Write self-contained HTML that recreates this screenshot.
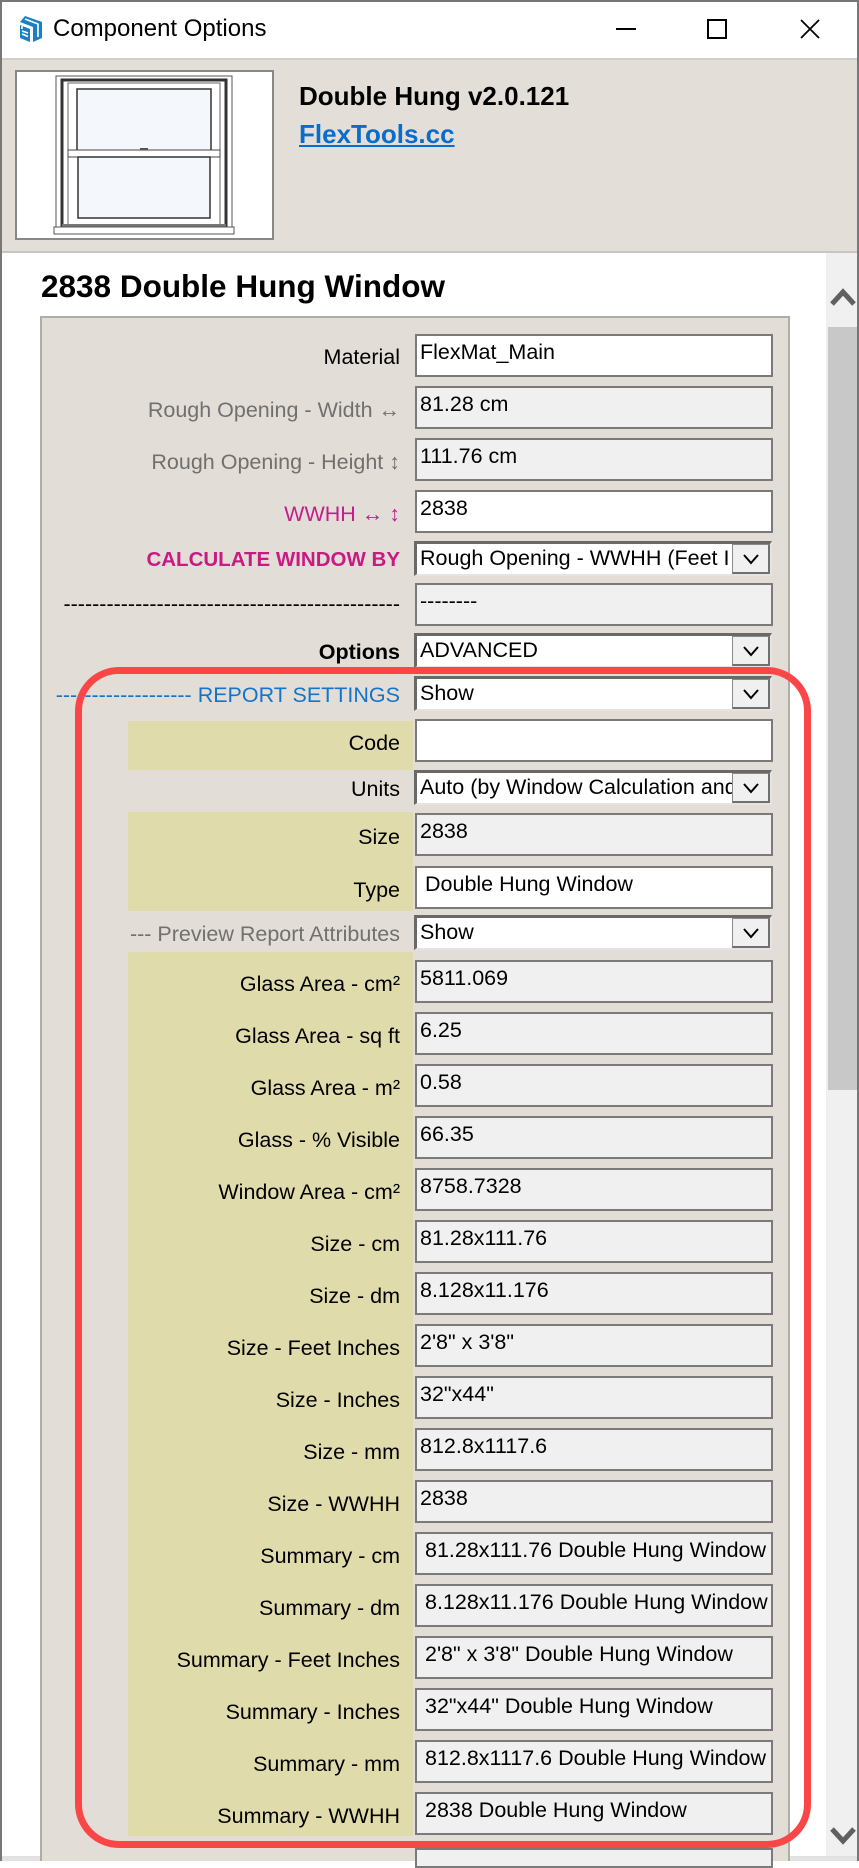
<!DOCTYPE html>
<html><head><meta charset="utf-8">
<style>
*{margin:0;padding:0;box-sizing:border-box}
body{width:859px;height:1861px;position:relative;overflow:hidden;background:#fff;font-family:"Liberation Sans",sans-serif;color:#000}
.a{position:absolute}
.lb{position:absolute;right:459px;font-size:21.5px;line-height:24px;white-space:nowrap;text-align:right}
.in{position:absolute;left:415px;width:358px;height:43px;border:2px solid #7a7a7a;background:#f0f0f0;font-size:21.5px;line-height:24px;padding:4px 0 0 3px;white-space:nowrap;overflow:hidden}
.w{background:#fff}
.sel{position:absolute;left:414px;width:358px;height:35px;background:#fff;border-top:3px solid #696969;border-left:3px solid #696969;border-right:2px solid #e4e4e4;border-bottom:2px solid #e4e4e4;font-size:21.5px;line-height:27px;padding:1px 0 0 3px;white-space:nowrap;overflow:hidden}
.sel .bt{position:absolute;right:0;top:0;width:38px;height:30px;background:#f0f0f0;border:1px solid #8a8a8a;border-right:2px solid #707070;border-bottom:2px solid #707070}
.bt svg{position:absolute;left:10px;top:8px}
.y{position:absolute;left:128px;width:285px;background:#e0dbaa}
</style></head><body>
<div class="a" style="left:0;top:0;width:859px;height:2px;background:#777"></div>
<div class="a" style="left:0;top:0;width:2px;height:1861px;background:#777"></div>
<div class="a" style="right:0;top:0;width:2px;height:1861px;background:#777"></div>
<svg class="a" style="left:16px;top:14px" width="30" height="30" viewBox="0 0 30 30"><path d="M9 2 L26 8 L26 24 L17 28 L17 13 L4 8 Z" fill="#1b7fc4"/><path d="M4 11 L14 15 L14 28 L4 24 Z" fill="#1b7fc4"/><path d="M6 12 L6 15 M6 17 L12 19 M6 20 L12 22.5 M9 5 L22 10 L22 23" stroke="#fff" stroke-width="1.6" fill="none"/></svg>
<div class="a" style="left:53px;top:15px;font-size:24px;line-height:28px">Component Options</div>
<div class="a" style="left:616px;top:28px;width:20px;height:2px;background:#000"></div>
<div class="a" style="left:707px;top:19px;width:20px;height:20px;border:2px solid #000"></div>
<svg class="a" style="left:800px;top:19px" width="20" height="20"><path d="M1 1 L19 19 M19 1 L1 19" stroke="#000" stroke-width="1.8"/></svg>
<div class="a" style="left:2px;top:58px;width:855px;height:195px;background:#e3dfd8;border-top:2px solid #d2cfc6;border-bottom:2px solid #c8c6c0"></div>
<div class="a" style="left:15px;top:70px;width:259px;height:170px;background:#fff;border:2px solid #888"></div>
<svg class="a" style="left:0;top:0" width="300" height="250">
<rect x="56" y="76" width="176" height="151" fill="#fff" stroke="#555" stroke-width="1"/>
<rect x="62" y="80" width="164" height="147" fill="none" stroke="#333" stroke-width="3"/>
<rect x="68" y="83" width="152" height="144" fill="none" stroke="#666" stroke-width="1"/>
<rect x="77" y="89" width="134" height="62" fill="#f4f8fc" stroke="#333" stroke-width="1.5"/>
<rect x="68" y="150" width="152" height="7" fill="#fff" stroke="#444" stroke-width="1"/>
<rect x="78" y="157" width="132" height="61" fill="#f4f8fc" stroke="#333" stroke-width="1.5"/>
<rect x="140" y="148" width="8" height="2" fill="#555"/>
<rect x="62" y="224" width="164" height="4" fill="#777"/>
<rect x="54" y="227" width="180" height="7" fill="#fff" stroke="#555" stroke-width="1"/>
</svg>
<div class="a" style="left:299px;top:81px;font-size:26px;font-weight:bold;line-height:30px">Double Hung v2.0.121</div>
<div class="a" style="left:299px;top:119px;font-size:26px;font-weight:bold;line-height:30px;color:#0a6ccc;text-decoration:underline">FlexTools.cc</div>
<div class="a" style="left:826px;top:253px;width:31px;height:1603px;background:#f0f0f0"></div>
<div class="a" style="left:828px;top:327px;width:29px;height:763px;background:#c8c8c8"></div>
<svg class="a" style="left:830px;top:286px" width="26" height="22"><path d="M2 18 L13 6 L24 18" stroke="#606060" stroke-width="5" fill="none"/></svg>
<svg class="a" style="left:830px;top:1825px" width="26" height="22"><path d="M2 4 L13 16 L24 4" stroke="#606060" stroke-width="5" fill="none"/></svg>
<div class="a" style="left:2px;top:1856px;width:855px;height:5px;background:#e2e2e2"></div>
<div class="a" style="left:41px;top:268px;font-size:31.5px;font-weight:bold;line-height:36px">2838 Double Hung Window</div>
<div class="a" style="left:40px;top:316px;width:750px;height:1545px;background:#e2ded7;border:2px solid #b0aca6;border-bottom:none"></div>
<div class="y" style="top:721px;height:49px"></div>
<div class="y" style="top:812px;height:99px"></div>
<div class="y" style="top:952px;height:884px"></div>

<div class="lb" style="top:345px">Material</div><div class="in w" style="top:334px">FlexMat_Main</div>
<div class="lb" style="top:398px;color:#707070">Rough Opening - Width ↔</div><div class="in" style="top:386px">81.28 cm</div>
<div class="lb" style="top:450px;color:#707070">Rough Opening - Height ↕</div><div class="in" style="top:438px">111.76 cm</div>
<div class="lb" style="top:502px;color:#c0208a">WWHH ↔ ↕</div><div class="in w" style="top:490px">2838</div>
<div class="lb" style="top:548px;color:#c81a82;font-weight:bold;font-size:20.5px">CALCULATE WINDOW BY</div><div class="sel" style="top:541px">Rough Opening - WWHH (Feet I<div class="bt"><svg width="16" height="12"><path d="M1 2 L8 10 L15 2" stroke="#000" stroke-width="2" fill="none"/></svg></div></div>
<div class="lb" style="top:592px">-----------------------------------------------</div><div class="in" style="top:583px">--------</div>
<div class="lb" style="top:640px;font-weight:bold">Options</div><div class="sel" style="top:633px">ADVANCED<div class="bt"><svg width="16" height="12"><path d="M1 2 L8 10 L15 2" stroke="#000" stroke-width="2" fill="none"/></svg></div></div>
<div class="lb" style="top:683px;color:#1474c8">------------------- REPORT SETTINGS</div><div class="sel" style="top:676px">Show<div class="bt"><svg width="16" height="12"><path d="M1 2 L8 10 L15 2" stroke="#000" stroke-width="2" fill="none"/></svg></div></div>
<div class="lb" style="top:731px">Code</div><div class="in w" style="top:719px"></div>
<div class="lb" style="top:777px">Units</div><div class="sel" style="top:770px">Auto (by Window Calculation and<div class="bt"><svg width="16" height="12"><path d="M1 2 L8 10 L15 2" stroke="#000" stroke-width="2" fill="none"/></svg></div></div>
<div class="lb" style="top:825px">Size</div><div class="in" style="top:813px">2838</div>
<div class="lb" style="top:878px">Type</div><div class="in w" style="top:866px;padding-left:8px">Double Hung Window</div>
<div class="lb" style="top:922px;color:#707070">--- Preview Report Attributes</div><div class="sel" style="top:915px">Show<div class="bt"><svg width="16" height="12"><path d="M1 2 L8 10 L15 2" stroke="#000" stroke-width="2" fill="none"/></svg></div></div>

<div class="lb" style="top:972px">Glass Area - cm²</div><div class="in" style="top:960px">5811.069</div>
<div class="lb" style="top:1024px">Glass Area - sq ft</div><div class="in" style="top:1012px">6.25</div>
<div class="lb" style="top:1076px">Glass Area - m²</div><div class="in" style="top:1064px">0.58</div>
<div class="lb" style="top:1128px">Glass - % Visible</div><div class="in" style="top:1116px">66.35</div>
<div class="lb" style="top:1180px">Window Area - cm²</div><div class="in" style="top:1168px">8758.7328</div>
<div class="lb" style="top:1232px">Size - cm</div><div class="in" style="top:1220px">81.28x111.76</div>
<div class="lb" style="top:1284px">Size - dm</div><div class="in" style="top:1272px">8.128x11.176</div>
<div class="lb" style="top:1336px">Size - Feet Inches</div><div class="in" style="top:1324px">2'8" x 3'8"</div>
<div class="lb" style="top:1388px">Size - Inches</div><div class="in" style="top:1376px">32"x44"</div>
<div class="lb" style="top:1440px">Size - mm</div><div class="in" style="top:1428px">812.8x1117.6</div>
<div class="lb" style="top:1492px">Size - WWHH</div><div class="in" style="top:1480px">2838</div>
<div class="lb" style="top:1544px">Summary - cm</div><div class="in" style="top:1532px;padding-left:8px">81.28x111.76 Double Hung Window</div>
<div class="lb" style="top:1596px">Summary - dm</div><div class="in" style="top:1584px;padding-left:8px">8.128x11.176 Double Hung Window</div>
<div class="lb" style="top:1648px">Summary - Feet Inches</div><div class="in" style="top:1636px;padding-left:8px">2'8" x 3'8" Double Hung Window</div>
<div class="lb" style="top:1700px">Summary - Inches</div><div class="in" style="top:1688px;padding-left:8px">32"x44" Double Hung Window</div>
<div class="lb" style="top:1752px">Summary - mm</div><div class="in" style="top:1740px;padding-left:8px">812.8x1117.6 Double Hung Window</div>
<div class="lb" style="top:1804px">Summary - WWHH</div><div class="in" style="top:1792px;padding-left:8px">2838 Double Hung Window</div>
<div class="in" style="top:1848px;height:20px"></div>

<div class="a" style="left:75px;top:667px;width:736px;height:1181px;border:7px solid #fa4646;border-radius:44px"></div>
</body></html>
